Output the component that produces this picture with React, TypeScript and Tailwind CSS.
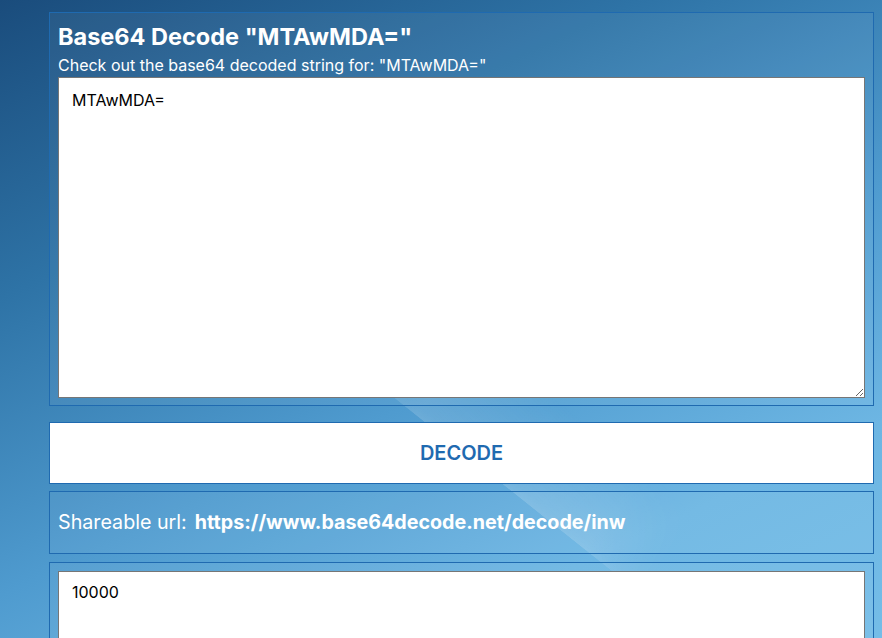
import { useState } from "react";

const App = () => {
  const [input, setInput] = useState("MTAwMDA=");
  const [output, setOutput] = useState("10000");

  const onDecode = () => {
    try {
      setOutput(atob(input));
    } catch {
      setOutput("");
    }
  };

  return (
    <div
      className="relative min-h-[638px] overflow-hidden bg-[linear-gradient(155deg,#1a4c7c_0%,#2e73a6_25%,#4f9bcf_50%,#6db6e3_70%,#79c1ea_100%)] font-['Inter','Noto_Sans',sans-serif]"
    >
      {/* wallpaper streak */}
      <div className="pointer-events-none absolute left-[351px] top-[393px] h-[100px] w-[360px] rotate-[38.5deg] bg-[linear-gradient(180deg,transparent_0%,rgba(255,255,255,0.13)_92%,rgba(255,255,255,0.16)_100%)] [mask-image:linear-gradient(90deg,transparent,black_20%,black_80%,transparent)]" />

      <div className="relative flex flex-col pl-[49px] pr-[8px] pt-[12px]">
        <div className="border border-[#1f6ab0] bg-white/5 px-[8px] pb-[7px] pt-[8px]">
          <h1 className="text-[23.5px] font-bold leading-[32px] text-white">
            Base64 Decode "MTAwMDA="
          </h1>
          <p className="text-[16px] leading-[24px] text-white">
            Check out the base64 decoded string for: "MTAwMDA="
          </p>
          <textarea
            value={input}
            onChange={(e) => setInput(e.target.value)}
            className="block h-[321px] w-full resize-y border border-[#767676] bg-white px-[13px] py-[10px] text-[16px] leading-[24px] text-black outline-none"
          />
        </div>

        <button
          onClick={onDecode}
          className="mt-[16px] h-[62px] w-full border border-[#1f6ab0] bg-white text-[20px] font-semibold text-[#1f6ab0]"
        >
          DECODE
        </button>

        <div className="mt-[7px] flex h-[63px] items-center gap-[8px] border border-[#1f6ab0] bg-white/5 px-[8px] text-[19.7px] text-white">
          <span>Shareable url:</span>
          <span className="font-bold">https://www.base64decode.net/decode/inw</span>
        </div>

        <div className="mt-[8px] border border-[#1f6ab0] bg-white/5 px-[8px] pb-[8px] pt-[8px]">
          <textarea
            value={output}
            readOnly
            className="block h-[200px] w-full resize-y border border-[#767676] bg-white px-[13px] py-[8px] text-[16px] leading-[24px] text-black outline-none"
          />
        </div>
      </div>
    </div>
  );
};

export default App;
